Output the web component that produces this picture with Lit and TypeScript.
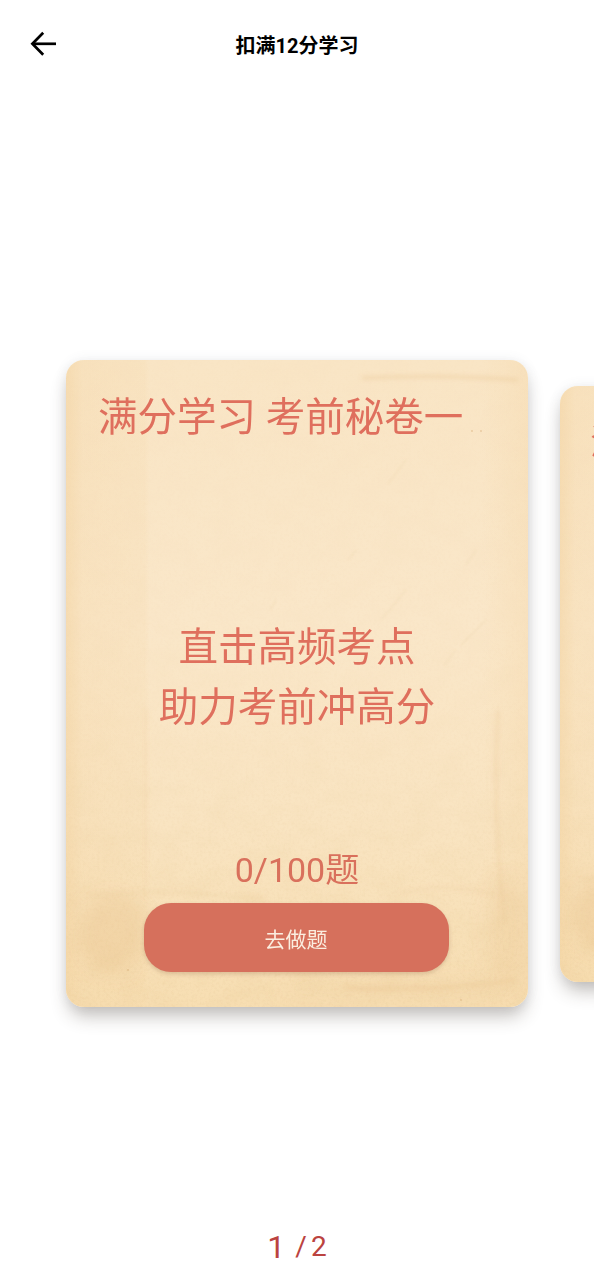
import { LitElement, html, css, svg } from "lit";
import { customElement, property } from "lit/decorators.js";

function paper(id: string) {
  return svg`<svg class="paper" viewBox="0 0 462 647" preserveAspectRatio="none" aria-hidden="true">
    <defs>
      <filter id="${id}-grain" x="0" y="0" width="100%" height="100%">
        <feTurbulence type="fractalNoise" baseFrequency="0.035 0.045" numOctaves="5" seed="7"/>
        <feColorMatrix type="matrix" values="0 0 0 0 0.84  0 0 0 0 0.62  0 0 0 0 0.34  1.5 0 0 0 -0.62"/>
      </filter>
      <filter id="${id}-fine" x="0" y="0" width="100%" height="100%">
        <feTurbulence type="fractalNoise" baseFrequency="0.35" numOctaves="3" seed="3"/>
        <feColorMatrix type="matrix" values="0 0 0 0 0.76  0 0 0 0 0.54  0 0 0 0 0.28  1.6 0 0 0 -0.72"/>
      </filter>
      <filter id="${id}-b8"><feGaussianBlur stdDeviation="9"/></filter>
      <filter id="${id}-b2"><feGaussianBlur stdDeviation="2"/></filter>
      <filter id="${id}-b1"><feGaussianBlur stdDeviation="0.8"/></filter>
      <linearGradient id="${id}-base" x1="0" y1="0" x2="0" y2="1">
        <stop offset="0" stop-color="#f9e5c5"/>
        <stop offset="0.4" stop-color="#fae7c9"/>
        <stop offset="0.72" stop-color="#f9e4c1"/>
        <stop offset="1" stop-color="#f7deb2"/>
      </linearGradient>
      <linearGradient id="${id}-edge" x1="0" y1="0" x2="1" y2="0">
        <stop offset="0" stop-color="#f3d3a0" stop-opacity="0.55"/>
        <stop offset="0.035" stop-color="#f3d3a0" stop-opacity="0.22"/>
        <stop offset="0.17" stop-color="#f3d3a0" stop-opacity="0.14"/>
        <stop offset="0.18" stop-color="#f3d3a0" stop-opacity="0"/>
        <stop offset="0.9" stop-color="#f3d3a0" stop-opacity="0"/>
        <stop offset="1" stop-color="#f3d3a0" stop-opacity="0.25"/>
      </linearGradient>
      <linearGradient id="${id}-fade" x1="0" y1="0" x2="0" y2="1">
        <stop offset="0" stop-color="#fff" stop-opacity="0.1"/>
        <stop offset="0.55" stop-color="#fff" stop-opacity="0.3"/>
        <stop offset="1" stop-color="#fff" stop-opacity="1"/>
      </linearGradient>
      <mask id="${id}-m"><rect width="462" height="647" fill="url(#${id}-fade)"/></mask>
    </defs>
    <rect width="462" height="647" fill="url(#${id}-base)"/>
    <rect width="462" height="647" fill="url(#${id}-edge)"/>
    <g mask="url(#${id}-m)">
      <rect width="462" height="647" filter="url(#${id}-grain)" opacity="0.32"/>
      <rect width="462" height="647" filter="url(#${id}-fine)" opacity="0.28"/>
    </g>
    <g filter="url(#${id}-b8)" fill="#e3b77c">
      <ellipse cx="46" cy="575" rx="34" ry="40" opacity="0.22"/>
      <ellipse cx="440" cy="570" rx="20" ry="55" opacity="0.16"/>
      <ellipse cx="330" cy="628" rx="120" ry="10" opacity="0.14"/>
    </g>
    <g filter="url(#${id}-b2)" fill="none" stroke="#e9c48f">
      <path d="M296 18 Q380 14 452 20" stroke-width="2.5" opacity="0.5"/>
      <path d="M80 350 V540" stroke-width="3" opacity="0.12"/>
      <path d="M24 535 Q110 528 200 540" stroke-width="4" opacity="0.16"/>
      <path d="M432 350 Q426 440 438 560" stroke-width="3" opacity="0.3"/>
      <path d="M280 628 Q370 632 450 620" stroke-width="3" opacity="0.4"/>
      <path d="M335 532 Q395 522 430 536" stroke-width="3" opacity="0.18"/>
    </g>
    <g filter="url(#${id}-b1)" fill="none" stroke="#ecd3a8" stroke-width="1" opacity="0.45">
      <path d="M344 40 L330 58"/><path d="M286 46 L272 68"/>
      <path d="M340 100 L322 124"/><path d="M290 190 L282 200"/>
      <path d="M340 230 L315 260"/><path d="M410 190 L400 205"/>
      <path d="M420 260 L395 285"/><path d="M390 290 L378 305"/>
      <path d="M210 240 L204 250"/>
    </g>
    <g fill="#d8ae78" opacity="0.5">
      <circle cx="406" cy="71" r="0.9"/><circle cx="415" cy="71" r="0.9"/>
      <circle cx="62" cy="610" r="1.1"/><circle cx="395" cy="640" r="0.9"/>
    </g>
  </svg>`;
}

@customElement("paper-card")
export class PaperCard extends LitElement {
  @property() heading = "";
  @property() tex = "p";
  @property({ type: Boolean, reflect: true }) small = false;

  static styles = css`
    :host {
      display: block;
      flex: none;
      width: 462px;
      height: 647px;
      --title: 39.5px;
      --mid: 39.5px;
      --mid-lh: 60px;
      --count: 34px;
      --btn-w: 305px;
      --btn-h: 69px;
      --btn-font: 21px;
      --pad-x: 32px;
      --pad-top: 34px;
      --pad-bottom: 35px;
      --mid-pad: 66px;
    }
    :host([small]) {
      width: 425px;
      height: 596px;
      --title: 36.5px;
      --mid: 36.5px;
      --mid-lh: 55px;
      --count: 31px;
      --btn-w: 281px;
      --btn-h: 64px;
      --btn-font: 19px;
      --pad-x: 30px;
      --pad-top: 33px;
      --pad-bottom: 32px;
      --mid-pad: 60px;
    }
    .card {
      position: relative;
      box-sizing: border-box;
      height: 100%;
      display: flex;
      flex-direction: column;
      align-items: center;
      padding: var(--pad-top) var(--pad-x) var(--pad-bottom);
      border-radius: 18px;
      overflow: hidden;
      color: #df6f5d;
      isolation: isolate;
    }
    .shadow {
      height: 100%;
      border-radius: 18px;
      box-shadow: 0 12px 18px -3px rgba(60, 50, 40, 0.3), 0 0 12px rgba(90, 100, 120, 0.1);
    }
    .paper {
      position: absolute;
      inset: 0;
      width: 100%;
      height: 100%;
      z-index: -1;
    }
    h2 {
      align-self: flex-start;
      margin: 0;
      font-size: var(--title);
      font-weight: 400;
      line-height: 48px;
      white-space: nowrap;
    }
    .mid {
      flex: 1;
      display: flex;
      flex-direction: column;
      justify-content: center;
      align-items: center;
      padding-top: var(--mid-pad);
      font-size: var(--mid);
      line-height: var(--mid-lh);
      white-space: nowrap;
    }
    .count {
      font-size: var(--count);
      line-height: 44px;
      color: #d9705c;
      margin-bottom: 11px;
      white-space: nowrap;
    }
    button {
      flex: none;
      width: var(--btn-w);
      height: var(--btn-h);
      border: 0;
      padding: 0;
      margin-right: 2px;
      border-radius: 27px;
      background: #d6705c;
      color: #fbeee0;
      font: inherit;
      font-size: var(--btn-font);
      box-shadow: 0 2px 4px rgba(120, 70, 40, 0.22);
    }
  `;

  render() {
    return html`<div class="shadow"><div class="card">
      ${paper(this.tex)}
      <h2>${this.heading}</h2>
      <div class="mid"><span>直击高频考点</span><span>助力考前冲高分</span></div>
      <div class="count">0/100题</div>
      <button>去做题</button>
    </div></div>`;
  }
}

@customElement("app-root")
export class AppRoot extends LitElement {
  static styles = css`
    :host {
      display: flex;
      flex-direction: column;
      width: 594px;
      height: 1280px;
      overflow: hidden;
      background: #fff;
      font-family: Roboto, "Noto Sans CJK SC", sans-serif;
    }
    header {
      flex: none;
      height: 90px;
      display: grid;
      grid-template-columns: 1fr auto 1fr;
      align-items: center;
    }
    .back {
      display: block;
      width: 30px;
      height: 30px;
      margin: 29px 0 0 29px;
      padding: 0;
      border: 0;
      background: none;
      align-self: start;
    }
    .back svg {
      display: block;
      width: 30px;
      height: 30px;
    }
    h1 {
      margin: 0;
      padding-top: 1px;
      font-size: 20px;
      font-weight: 700;
      line-height: 28px;
      color: #000;
    }
    .stage {
      flex: none;
      display: flex;
      align-items: center;
      gap: 32px;
      padding: 270px 0 40px 66px;
    }
    .pager {
      margin-top: auto;
      height: 60px;
      display: flex;
      justify-content: center;
      align-items: center;
      padding-bottom: 6px;
      box-sizing: border-box;
      color: #bb4340;
      font-size: 28px;
      line-height: 40px;
    }
    .cur {
      font-size: 32px;
      margin-right: 10px;
    }
    .sep {
      margin-right: 4px;
    }
  `;

  render() {
    return html`
      <header>
        <button class="back" aria-label="返回">
          <svg viewBox="0 0 30 30" fill="none" stroke="#000" stroke-width="2.7">
            <path d="M27 14.8 H4.5" />
            <path d="M14.2 3.8 L3.4 14.8 L14.2 25.8" />
          </svg>
        </button>
        <h1>扣满12分学习</h1>
        <span></span>
      </header>
      <div class="stage">
        <paper-card heading="满分学习 考前秘卷一" tex="a"></paper-card>
        <paper-card small heading="满分学习 考前秘卷二" tex="b"></paper-card>
      </div>
      <div class="pager"><span class="cur">1</span><span class="sep">/</span><span>2</span></div>
    `;
  }
}
